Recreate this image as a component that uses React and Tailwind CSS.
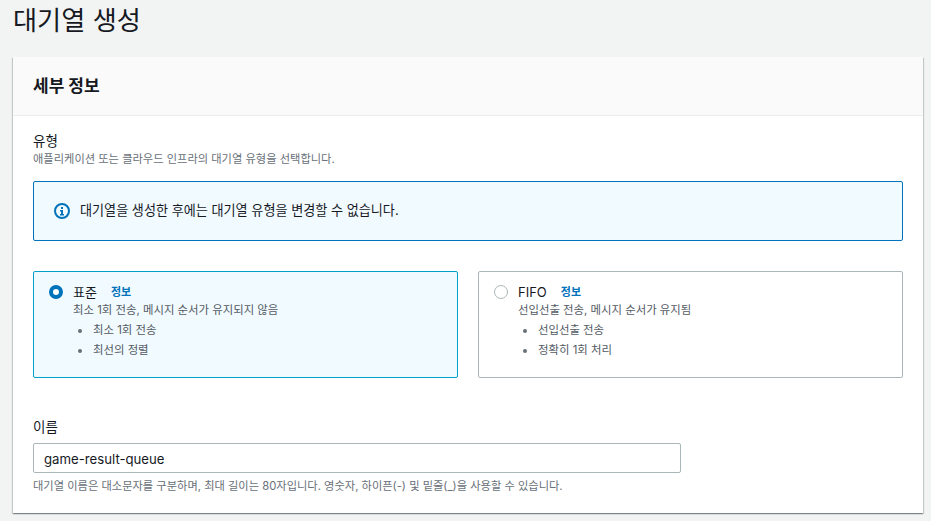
const FONT = "font-['Inter','Noto_Sans_CJK_KR',sans-serif]"

function InfoIcon() {
  return (
    <svg width="16" height="16" viewBox="0 0 16 16" className="shrink-0">
      <circle cx="8" cy="8" r="7" fill="none" stroke="#0073bb" strokeWidth="2" />
      <rect x="7" y="7" width="2" height="5" fill="#0073bb" />
      <rect x="6" y="11" width="4" height="1.5" fill="#0073bb" />
      <rect x="6" y="7" width="2" height="1.5" fill="#0073bb" />
      <rect x="7" y="4" width="2" height="2" fill="#0073bb" />
    </svg>
  )
}

function Radio({ checked }) {
  if (checked) {
    return <span className="block w-[14px] h-[14px] rounded-full border-[4px] border-[#0073bb] bg-white shrink-0" />
  }
  return <span className="block w-[14px] h-[14px] rounded-full border border-[#aab7b8] bg-white shrink-0" />
}

function TypeCard({ title, desc, items, selected }) {
  return (
    <div className={`flex-1 h-[107px] rounded-[2px] border pl-[15px] pt-[11px] flex gap-[10px] ${selected ? 'border-[#00a1c9] bg-[#f1faff]' : 'border-[#aab7b8] bg-white'}`}>
      <div className="pt-[2px]">
        <Radio checked={selected} />
      </div>
      <div className="min-w-0">
        <div className="flex items-center h-[18px]">
          <span className="text-[13px] leading-[18px] text-[#16191f]">{title}</span>
          <span className="ml-[14px] text-[11px] font-semibold leading-[18px] text-[#0073bb]">정보</span>
        </div>
        <p className="text-[11.4px] leading-[16px] mt-[1px] text-[#545b64]">{desc}</p>
        <ul className="mt-[2.5px]">
          {items.map(item => (
            <li key={item} className="h-[20px] flex items-center text-[11.4px] text-[#545b64]">
              <span className="w-[4px] h-[4px] rounded-full bg-[#687078] ml-[5px] mr-[11px]" />
              {item}
            </li>
          ))}
        </ul>
      </div>
    </div>
  )
}

export default function App() {
  return (
    <div className={`${FONT} w-[931px] h-[521px] overflow-hidden bg-[#f2f3f3] px-[13px]`}>
      <h1 className="h-[57px] pt-[3px] text-[26.2px] leading-[36px] font-normal text-[#16191f]">대기열 생성</h1>

      <div className="w-[910px] h-[456px] bg-white shadow-[0_1px_1px_0_rgba(0,28,36,0.3),1px_1px_1px_0_rgba(0,28,36,0.15),-1px_1px_1px_0_rgba(0,28,36,0.15)]">
        <div className="h-[59px] flex items-center px-[20px] bg-[#fafafa] border-b border-[#eaeded]">
          <h2 className="text-[17px] font-bold leading-[22px] text-[#16191f]">세부 정보</h2>
        </div>

        <div className="px-[20px] pt-[16px]">
          <div className="text-[13.5px] leading-[18px] text-[#16191f]">유형</div>
          <p className="mt-[1px] text-[11.25px] leading-[16px] text-[#687078]">애플리케이션 또는 클라우드 인프라의 대기열 유형을 선택합니다.</p>

          <div className="mt-[14px] h-[60px] flex items-center gap-[10px] pl-[20px] rounded-[2px] border border-[#0073bb] bg-[#f1faff]">
            <InfoIcon />
            <span className="text-[13.1px] text-[#16191f]">대기열을 생성한 후에는 대기열 유형을 변경할 수 없습니다.</span>
          </div>

          <div className="mt-[30px] flex gap-[20px]">
            <TypeCard selected title="표준" desc="최소 1회 전송, 메시지 순서가 유지되지 않음" items={['최소 1회 전송', '최선의 정렬']} />
            <TypeCard title="FIFO" desc="선입선출 전송, 메시지 순서가 유지됨" items={['선입선출 전송', '정확히 1회 처리']} />
          </div>

          <div className="mt-[40px] text-[13.5px] leading-[18px] text-[#16191f]">이름</div>
          <input
            readOnly
            value="game-result-queue"
            className="mt-[7px] block w-[648px] h-[30px] pl-[10px] pr-[11px] pt-[1px] rounded-[2px] border border-[#aab7b8] bg-white text-[13.2px] text-[#16191f] outline-none"
          />
          <p className="mt-[5px] text-[11.25px] leading-[16px] text-[#687078]">대기열 이름은 대소문자를 구분하며, 최대 길이는 80자입니다. 영숫자, 하이픈(-) 및 밑줄(_)을 사용할 수 있습니다.</p>
        </div>
      </div>
    </div>
  )
}
